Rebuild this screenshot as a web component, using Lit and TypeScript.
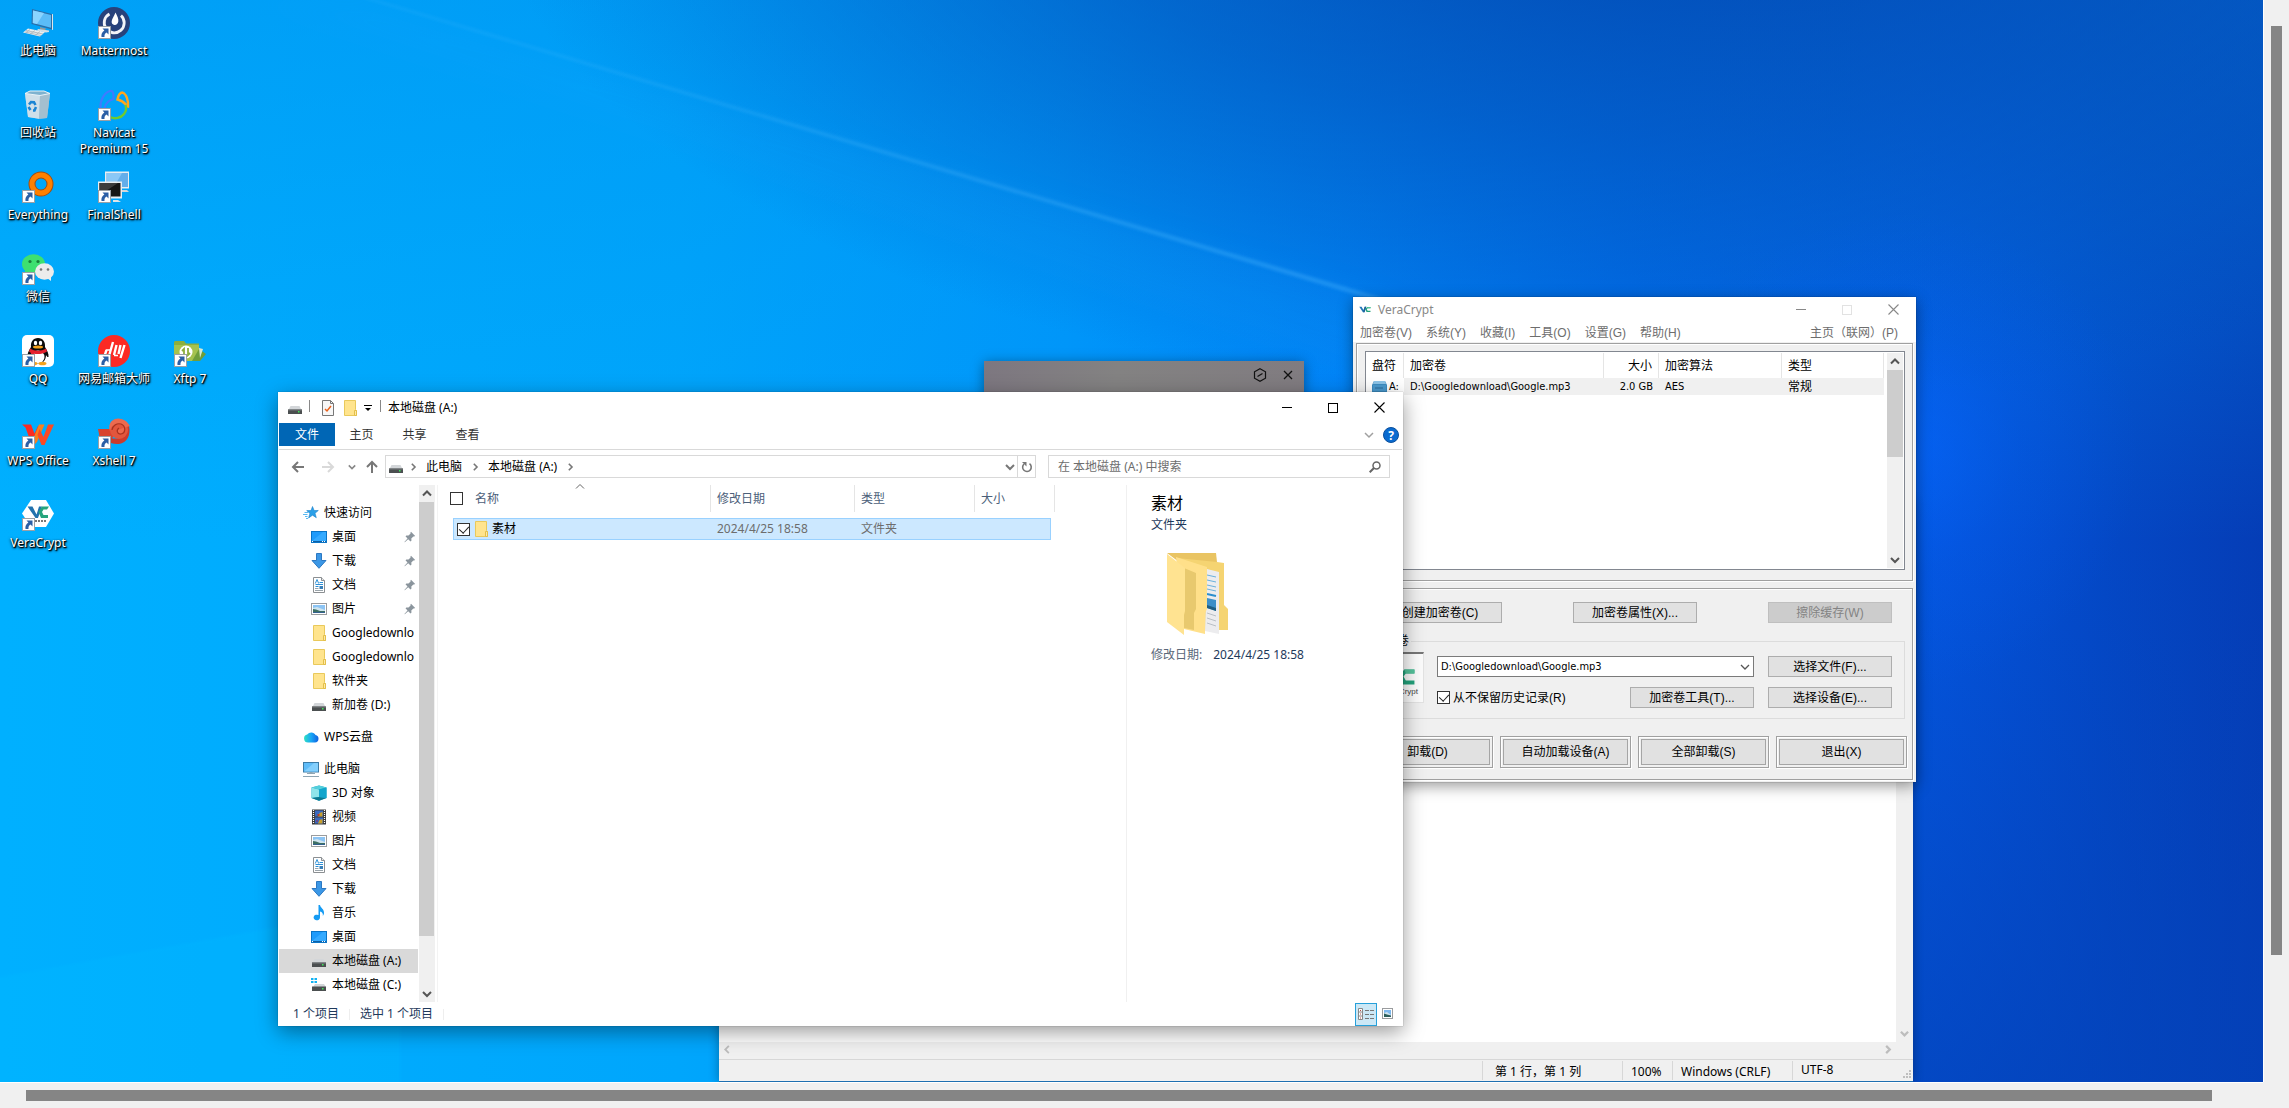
import { LitElement, html, css, svg, nothing, TemplateResult } from "lit";
import { customElement } from "lit/decorators.js";
import { classMap } from "lit/directives/class-map.js";

/* ---------- shared styles ---------- */

const base = css`
  * { box-sizing: border-box; }
  :host {
    display: block;
    font-family: "Noto Sans", "Noto Sans CJK SC", sans-serif;
    font-size: 12px;
    line-height: 16px;
    color: #000;
  }
  button, input, select { font: inherit; color: inherit; margin: 0; }
  button { padding: 0; border: 0; background: none; }
  svg { display: block; flex: none; }
  .check {
    appearance: none;
    display: block;
    flex: none;
    width: 13px;
    height: 13px;
    border: 1px solid #333;
    background: #fff;
    position: relative;
  }
  .check:checked::after {
    content: "";
    position: absolute;
    left: 3px;
    top: 0;
    width: 5px;
    height: 8px;
    border: solid #222;
    border-width: 0 1px 1px 0;
    transform: rotate(42deg);
  }
`;

/* ---------- small icons ---------- */

type Icon = () => TemplateResult;

const box = (w: number, h: number, body: unknown, vb = `0 0 ${w} ${h}`) =>
  html`<svg width=${w} height=${h} viewBox=${vb} aria-hidden="true">${body}</svg>`;

const chevron = (dir: "up" | "down" | "left" | "right", size = 9, color = "#555", weight = 2) => {
  const d = {
    up: "M1 6.5 5 2.5 9 6.5",
    down: "M1 3 5 7 9 3",
    left: "M6.5 1 2.5 5 6.5 9",
    right: "M3.5 1 7.5 5 3.5 9",
  }[dir];
  return box(size, size, svg`<path d=${d} fill="none" stroke=${color} stroke-width=${weight}/>`, "0 0 10 10");
};

const drive: Icon = () => box(16, 16, svg`
  <path d="M3.500 6h9l2 4h-13z" fill="#d3d6d9"/>
  <rect x="1" y="9.500" width="14" height="4.500" fill="#4b4f50"/>
  <rect x="1" y="9.500" width="14" height="1" fill="#74797b"/>
  <rect x="11" y="11" width="1.500" height="1.500" fill="#3fe85a"/>`);

const driveC: Icon = () => box(16, 16, svg`
  <path d="M0 1h2.500v2H0zM3.500 1H6v2H3.500zM0 4h2.500v2H0zM3.500 4H6v2H3.500z" fill="#12b3f3"/>
  <path d="M4 7h9l2 3H2z" fill="#d3d6d9"/>
  <rect x="1" y="9.500" width="14" height="4.500" fill="#4b4f50"/>
  <rect x="11" y="11" width="1.500" height="1.500" fill="#3fe85a"/>`);

const folder: Icon = () => box(16, 16, svg`
  <path d="M2.500 .5h11v9l1 1v5h-12z" fill="#ffe48d" stroke="#e9c95b"/>
  <path d="M12.500 15.500v-5h2v5z" fill="#ffe9a6" stroke="#e3bf4a"/>`);

const desktopIcon: Icon = () => box(16, 16, svg`
  <rect x=".5" y="2.500" width="15" height="11" fill="#1e9bfb" stroke="#0a74c6"/>
  <path d="M1 12 12 3h3v9z" fill="#35aaff"/>
  <rect x="1" y="12" width="14" height="1" fill="#0d5fa5"/>
  <path d="M1 12h1v1H1zM11 12h1v1h-1zM13 12h1v1h-1z" fill="#fff"/>`);

const download: Icon = () => box(16, 16, svg`
  <path d="M5.500 .5h5v7h4.500L8 15.300 1 7.500h4.500z" fill="#3b97e6" stroke="#2c78c2"/>`);

const documentIcon: Icon = () => box(16, 16, svg`
  <path d="M2.500 .5h8l3 3v12h-11z" fill="#fff" stroke="#8b8f92"/>
  <path d="M10.500 .5v3h3" fill="#e8e8e8" stroke="#8b8f92"/>
  <path d="M4.300 6.500l1.700-4 1.700 4M8.500 5.500h3.500M4.500 7.500h7.500M4.500 9.500h3" fill="none" stroke="#2c8fd6"/>
  <path d="M4 11.500h3.500M4 13.500h8" stroke="#9aa4aa"/>
  <rect x="8.500" y="9" width="3.500" height="3" fill="#3a7fb8"/>`);

const picture = (w = 16) => box(w, w, svg`
  <rect x=".5" y="2.500" width="15" height="11" fill="#fff" stroke="#9a9c9e"/>
  <rect x="2" y="4" width="12" height="8" fill="#8cc4f4"/>
  <path d="M2 7l4-1 8 3v3H2z" fill="#cfe4ee"/>
  <path d="M2 8l3 .5 4 1.500h5v2H2z" fill="#3d6f64"/>
  <path d="M2 11h12v1H2z" fill="#34618f"/>`, "0 0 16 16");

const thumbnails: Icon = () => box(14, 14, svg`
  <rect x="1.500" y="1.500" width="10" height="10" fill="#fff" stroke="#9a9c9e"/>
  <rect x="3" y="3" width="7" height="7" fill="#7db8ee"/>
  <path d="M3 6l3-1 4 3v2H3z" fill="#cfe4ee"/><path d="M3 6.500l3 1 4 1V10H3z" fill="#2e5f5c"/>`);

const star: Icon = () => box(16, 16, svg`
  <path d="M9.500 1.500l1.600 4h4.200l-3.300 2.800 1.300 4.400-3.800-2.500L5.600 13l1.300-4.600L3.700 5.600H8z" fill="#2ba0e8" stroke="#1c82c9" stroke-width=".6"/>
  <path d="M1.500 7.500H5M0 9.500h4.500M2 11.500h2.500M3 13.500h2" stroke="#58b9f2"/>`);

const cloud: Icon = () => box(16, 16, svg`
  <defs><linearGradient id="cg"><stop offset="0" stop-color="#2ee0c4"/><stop offset=".5" stop-color="#18a5f5"/><stop offset="1" stop-color="#1060e0"/></linearGradient></defs>
  <path d="M5 13.500a4 4 0 0 1-.8-7.900A4.800 4.800 0 0 1 12.500 6a3.800 3.800 0 0 1-.5 7.500z" fill="url(#cg)"/>`);

const computer: Icon = () => box(16, 16, svg`
  <rect x=".5" y="1.500" width="15" height="9.500" fill="#5fbcf8" stroke="#3c7ba6"/>
  <path d="M1 10.500 11 2h4v8.500z" fill="#83cffd"/>
  <path d="M4 12.500h8M0 15.500h16" stroke="#8fa5b2"/><path d="M8 11v2" stroke="#8fa5b2" stroke-width="3"/>`);

const cube: Icon = () => box(16, 16, svg`
  <path d="M8 .5 15.500 2.500v10.500L8 15.700.5 13V2.500z" fill="#1ba7c6"/>
  <path d="M.5 2.500 8 4.500v7.500L.5 13z" fill="#8fe4ea"/>
  <path d="M.5 2.500 8 .5l7.500 2L8 4.500z" fill="#54cfdc"/>
  <path d="M.5 13 8 12l7.500 1L8 15.700z" fill="#0c7890"/>
  <path d="M8 4.500v7.500l7.500 1V2.500z" fill="#12a5cc"/>`);

const video: Icon = () => box(16, 16, svg`
  <rect x="1" y=".5" width="14" height="15" fill="#3a3a3a"/>
  <path d="M2.500 1v14M13.500 1v14" stroke="#fff" stroke-width="1.200" stroke-dasharray="1 1"/>
  <rect x="4" y="1.500" width="8" height="6" fill="#3b6ac0"/><rect x="4" y="8.500" width="8" height="6" fill="#3b6ac0"/>
  <path d="M7 7.500l1.500-3.500 3-1v4.500z" fill="#c9a02c"/><path d="M6.500 5h2v2h-2z" fill="#b83a2a"/>
  <path d="M7 14.500l1.500-3.500 3-1v4.500z" fill="#c9a02c"/><path d="M5 11h2v2H5z" fill="#6b4a8a"/>`);

const music: Icon = () => box(16, 16, svg`
  <path d="M7.500 0h1.500c.4 3 4.500 4 4 8.500-.2 1-.6 1.800-1.200 2.500.5-2.500-.6-4.200-2.800-4.500V12.500a3.200 2.800 0 1 1-1.500-2.400z" fill="#159bf3"/>`);

const pin = () => box(12, 12, svg`
  <path d="M7 .8 11.200 5l-1.200.6-.6-.2L7.300 7.500l.2 2-1 .9L4.200 8.200.8 11.300l-.4-.4L3.500 7.500 1.500 5.300l.9-.9 2.100.1L6.600 2.500l-.2-.8z" fill="#8b959d"/>`);

const arrow = (color: string, turn = 0) => box(14, 14, svg`
  <path transform=${`rotate(${turn} 7 7)`} d="M13 7H2M7 2 2 7l5 5" fill="none" stroke=${color} stroke-width="2"/>`);

const closeX = (s = 11, color = "#000") => box(s, s, svg`
  <path d="M.5 .5 10.500 10.500M10.500 .5 .5 10.500" stroke=${color} stroke-width="1.100"/>`, "0 0 11 11");

const vcMark = (w: number, h: number) => box(w, h, svg`
  <path d="M1 2h9l7 12 2-4 3-8h6l-7 21h-6z" fill="#2277b8"/>
  <path d="M22 2h6l-7 21h-5z" fill="#1c5f93"/>
  <path d="M44 3H31l-7 9 5 10h15v-5H33l-3-5 3-4h11z" fill="#23a37c"/>
  <path d="M31 3h13v5H33z" fill="#54c39b"/>`, "0 0 46 25");

/* ---------- 32px desktop icons ---------- */

const shortcut = svg`
  <rect x=".5" y="19.500" width="12" height="12" fill="#fff" stroke="#9aa0a6"/>
  <path d="M4.500 21.500h6V27.500L8.600 25.600C6.900 26.700 6.300 28 6.500 30H3.500c-.5-3 .6-5.200 2.900-6.600z" fill="#2b5fa6"/>`;

const art: Record<string, unknown> = {
  pc: svg`
    <path d="M10 2 30 7v15.500L9.500 17z" fill="#2b6ea8"/><path d="M11 3.500 29 8v12.800L10.800 16z" fill="#5bbcf8"/>
    <path d="M11 3.500 22 6 15 17l-4.200-1z" fill="#8ad4ff"/><path d="M30 7l1 .3v15.400l-1 .3z" fill="#dfe6ea"/>
    <path d="M18 20l6 1.500-1 2-5-1z" fill="#8d999f"/><path d="M16 22l11 1.500v1.500l-3 .5-9-2z" fill="#d7dee2"/>
    <path d="M6 21.500l17 3.500-5 4.500-17-4z" fill="#e9edef"/><path d="M4 23.500l17 3.500M3 25l16 3.500M8 22.500l-4 3M13 23.500l-5 3.500M18 24.500l-5 4" stroke="#a9b2b8" stroke-width=".8"/>`,
  bin: svg`
    <path d="M3 4.500 8 2h14l6 2.500L25 29l-8 .8L6 28z" fill="#b5cfdf" opacity=".9"/>
    <path d="M3 4.500 18 6.500 17 29.800 6 28z" fill="#cfdfe9"/><path d="M18 6.500 28 4.500 25 29l-8 .8z" fill="#a4bfcf"/>
    <path d="M3 4.500 8 2h14l6 2.500-10 2z" fill="#7fb2cf" stroke="#e9f3f8"/>
    <path d="M7 15.500l2-2.500 3 .3 1.500 2.700M14 18l-1.500 3.500H11M8.500 21 6.500 18" fill="none" stroke="#1a84d4" stroke-width="2.500"/>`,
  mattermost: svg`
    <circle cx="16" cy="16" r="16" fill="#28427b"/>
    <path d="M11.500 7A10 10 0 1 0 23 8.500" fill="none" stroke="#f3f4f8" stroke-width="2.800"/>
    <path d="M17.500 5.500c2 4 3.200 6.500 2.800 9-.4 2.500-2 3.600-3.800 3.400-2-.3-3.200-2-2.800-4 .4-2.200 2.400-4.600 3.800-8.400z" fill="#fff"/>`,
  navicat: svg`
    <path d="M2.500 19C2 11 6 4 12 2c3-.5 4 2 3.500 8-4 1-8 4-9 9" fill="none" stroke="#3f7bff" stroke-width="2.200"/>
    <path d="M19.500 10.500c1-5 3-7 5-7 4 1.500 6 8 5.500 14-2-.5-3-5.500-10.500-7z" fill="none" stroke="#ffa61c" stroke-width="2.400"/>
    <path d="M12 28c5 2.500 11 1 14-3 2.500-3 2.500-6 1.500-9" fill="none" stroke="#6fcb2e" stroke-width="2.400"/>`,
  everything: svg`<circle cx="19" cy="13" r="9" fill="none" stroke="#a34d10" stroke-width="7"/><circle cx="19" cy="13" r="9" fill="none" stroke="#ff8000" stroke-width="5"/>`,
  finalshell: svg`
    <path d="M7 .5h24v17H7z" fill="#e9edf0"/><path d="M8.500 2h21.500v14H8.500z" fill="#63aeea"/><path d="M8.500 2H24l-8 14H8.500z" fill="#8ac8f6"/>
    <path d="M24 19h5l2 2h-7z" fill="#cfd6da"/>
    <path d="M0 10.500h24v17H0z" fill="#e9edf0"/><path d="M1.500 12h21v13.500h-21z" fill="#161616"/><path d="M1.500 12H20L8 20H1.500z" fill="#3c3c3c"/>
    <path d="M15 29h5l3 2h-8z" fill="#dfe4e7"/>`,
  wechat: svg`
    <ellipse cx="11.500" cy="11" rx="11.500" ry="9.800" fill="#3ee070"/><path d="M3 17v6l5-3z" fill="#3ee070"/>
    <circle cx="8" cy="8.500" r="1.600" fill="#1a7f3b"/><circle cx="16" cy="8.500" r="1.600" fill="#1a7f3b"/>
    <ellipse cx="22.500" cy="18.500" rx="9.500" ry="8.200" fill="#ececec"/><path d="M25 25l4 3v-5z" fill="#ececec"/>
    <circle cx="19" cy="16.500" r="1.300" fill="#777"/><circle cx="26" cy="16.500" r="1.300" fill="#777"/>`,
  qq: svg`
    <rect width="32" height="32" rx="5" fill="#fff"/>
    <path d="M16 3c-5 0-7.500 4-7 9-2 3-4 7-3.500 10 1 .5 2-1 2.500-2 0 5 3 8.500 8 8.500s8-3.500 8-8.500c.5 1 1.500 2.500 2.500 2 .5-3-1.500-7-3.500-10 .5-5-2-9-7-9z" fill="#0c0c0c"/>
    <ellipse cx="16" cy="22" rx="6.500" ry="6.500" fill="#fff"/>
    <ellipse cx="13.500" cy="8" rx="1.700" ry="2.300" fill="#fff"/><ellipse cx="18.500" cy="8" rx="1.700" ry="2.300" fill="#fff"/>
    <ellipse cx="16" cy="12" rx="5" ry="1.500" fill="#f5a21b"/>
    <path d="M8 13.500c5 3 11 3 16 0l1 3c-4 2.500-9 3-13 2.200V24H9v-6l-2-1.500z" fill="#e5202c"/>
    <ellipse cx="11.500" cy="28.500" rx="4" ry="1.800" fill="#f5a21b"/><ellipse cx="20.500" cy="28.500" rx="4" ry="1.800" fill="#f5a21b"/>`,
  netease: svg`
    <circle cx="16" cy="16" r="16" fill="#fb2a24"/>
    <path d="M6.500 21l2-6M11 21l4-14M16 20l2.500-10M20.500 19l2-9M22.500 23l4-13" stroke="#fff" stroke-width="2.400" fill="none"/>
    <path d="M8 15h4M8 20.500h3.500M16 20.500h4" stroke="#fff" stroke-width="1.300"/>`,
  xftp: svg`
    <path d="M0 7l1-1h9l2 2.500h13V26H0z" fill="#8cae3e"/><path d="M0 10h25v16H0z" fill="#a5c24e"/>
    <path d="M25 14l7 5-6 7h-8z" fill="#6f9d3a"/><path d="M25 13l4 1-3 9z" fill="#d9ead0"/>
    <circle cx="12" cy="17" r="6.500" fill="#fff"/><path d="M10 21v-7l-2 2M14 13v7l2-2" stroke="#8cae3e" stroke-width="1.800" fill="none"/>`,
  wps: svg`
    <path d="M0 7.500h9l3.500 9L16 9l3.500-1.500L13 27H9.500L3.500 10.500z" fill="#fb2b22"/>
    <path d="M17 7.500h5.500L15 25l-2 2-1.500-6z" fill="#f7801f"/>
    <path d="M17.500 12l4 8L26 7.500h6L22.500 28h-3L15.500 18z" fill="#fb4a24"/>`,
  xshell: svg`
    <path d="M0 12h13l4 3-3 7H2z" fill="#d8442f"/>
    <path d="M31 9c2 9-2 17-10 18-5 .5-9-1-11-3l3-3c7 2 15-1 15-12z" fill="#cc3a2c"/>
    <circle cx="21" cy="13" r="9" fill="#e2563d"/>
    <path d="M32 9C29 3 22 0 17 2c-5 2-7 7-5 12 1-5 5-8 9-7 5 0 7 6 3 9-2 1-5 0-5-3" fill="#ec6a4f"/>
    <path d="M14 13c1-5 5-7 9-6 5 2 5 9 0 10-4 .5-5-4-2-6" fill="none" stroke="#a8321f" stroke-width="1.200"/>`,
  veracrypt: svg`
    <path d="M9 1h15l8 13.500L24 28H9L0 14.500z" fill="#fff"/>
    <path d="M5.500 7.500h5l4 8 1-3 1.500-5h3L16 19h-2.500z" fill="#2272ad"/>
    <path d="M27 7.500h-7l-3.500 5.500 2.500 6h7v-3h-4.500l-1.500-3 1.500-2.500h3.500z" fill="#27a57d"/>
    <path d="M13 22h11" stroke="#777" stroke-width="2" stroke-dasharray="2 1"/>`,
};

const shortcuts: { id: string; label: string; col: number; row: number; link?: boolean }[] = [
  { id: "pc", label: "此电脑", col: 1, row: 1, link: false },
  { id: "mattermost", label: "Mattermost", col: 2, row: 1 },
  { id: "bin", label: "回收站", col: 1, row: 2, link: false },
  { id: "navicat", label: "Navicat Premium 15", col: 2, row: 2 },
  { id: "everything", label: "Everything", col: 1, row: 3 },
  { id: "finalshell", label: "FinalShell", col: 2, row: 3 },
  { id: "wechat", label: "微信", col: 1, row: 4 },
  { id: "qq", label: "QQ", col: 1, row: 5 },
  { id: "netease", label: "网易邮箱大师", col: 2, row: 5 },
  { id: "xftp", label: "Xftp 7", col: 3, row: 5 },
  { id: "wps", label: "WPS Office", col: 1, row: 6 },
  { id: "xshell", label: "Xshell 7", col: 2, row: 6 },
  { id: "veracrypt", label: "VeraCrypt", col: 1, row: 7 },
];

/* ---------- file explorer ---------- */

interface NavItem { label: string; icon: Icon; root?: boolean; pinned?: boolean; active?: boolean; gap?: boolean }

const navItems: NavItem[] = [
  { label: "快速访问", icon: star, root: true },
  { label: "桌面", icon: desktopIcon, pinned: true },
  { label: "下载", icon: download, pinned: true },
  { label: "文档", icon: documentIcon, pinned: true },
  { label: "图片", icon: picture, pinned: true },
  { label: "Googledownlo", icon: folder },
  { label: "Googledownlo", icon: folder },
  { label: "软件夹", icon: folder },
  { label: "新加卷 (D:)", icon: drive },
  { label: "WPS云盘", icon: cloud, root: true, gap: true },
  { label: "此电脑", icon: computer, root: true, gap: true },
  { label: "3D 对象", icon: cube },
  { label: "视频", icon: video },
  { label: "图片", icon: picture },
  { label: "文档", icon: documentIcon },
  { label: "下载", icon: download },
  { label: "音乐", icon: music },
  { label: "桌面", icon: desktopIcon },
  { label: "本地磁盘 (A:)", icon: drive, active: true },
  { label: "本地磁盘 (C:)", icon: driveC },
];

@customElement("file-explorer")
export class FileExplorer extends LitElement {
  static styles = [base, css`
    :host {
      display: flex;
      flex-direction: column;
      padding: 0 1px;
      background: #fff;
      box-shadow: 0 0 1px #0006, 0 6px 20px #0006;
    }
    .titlebar { display: flex; align-items: center; height: 31px; padding-left: 8px; }
    .quick { display: flex; align-items: center; gap: 6px; }
    .rule { width: 1px; height: 12px; background: #888; margin: 0 4px 3px 0; }
    .rule.last { margin: 0 7px 3px 2px; }
    .title { flex: 1; font-weight: 400; font-size: 12px; margin: 0; }
    .caption { display: flex; height: 31px; }
    .caption button { width: 46px; display: grid; place-items: center; }
    .square { width: 10px; height: 10px; border: 1px solid #000; }
    .dash { width: 10px; height: 1px; background: #000; }
    .ribbon { display: flex; height: 27px; padding-bottom: 3px; border-bottom: 1px solid #d9d9d9; color: #333; }
    .ribbon button { width: 53px; height: 24px; }
    .ribbon .file { width: 56px; height: 23px; background: #0066b5; color: #fff; }
    .ribbon .spacer { flex: 1; }
    .ribbon .tool { width: 22px; display: grid; place-items: center; }
    .address { display: flex; align-items: center; height: 35px; padding: 5px 12px 7px 11px; }
    .address .nav { width: 16px; height: 23px; display: grid; place-items: center; }
    .address .fwd { margin-left: 14px; }
    .address .recent { margin-left: 8px; }
    .address .parent { margin: 0 5px 0 4px; }
    .crumbs { display: flex; align-items: center; flex: 1; height: 23px; border: 1px solid #d9d9d9; padding-left: 2px; }
    .crumbs .sep { margin: 0 9px; }
    .crumbs .sep.first { margin-left: 5px; }
    .crumbs .end { flex: 1; }
    .crumbs .drop { width: 14px; display: grid; place-items: center; }
    .crumbs .reload { width: 18px; height: 21px; border-left: 1px solid #d9d9d9; display: grid; place-items: center; }
    .search { display: flex; align-items: center; width: 342px; height: 23px; margin-left: 12px; padding: 0 8px 0 9px; border: 1px solid #d9d9d9; }
    .search input { flex: 1; min-width: 0; border: 0; padding: 0; outline: 0; background: none; }
    .search input::placeholder { color: #6d6d6d; opacity: 1; }
    .main { flex: 1; display: flex; min-height: 0; }
    .tree { width: 139px; margin: 0 1px 0 0; padding: 16px 0 0; list-style: none; overflow: hidden; }
    .tree li.gap { margin-top: 8px; }
    .tree a { display: flex; align-items: center; gap: 5px; height: 24px; padding: 0 0 0 32px; color: inherit; text-decoration: none; white-space: nowrap; }
    .tree a.root { padding-left: 24px; }
    .tree a.active { background: #d9d9d9; }
    .tree .name { flex: 1; }
    .tree .pin { margin-right: 2px; }
    .scroll { width: 16px; display: flex; flex-direction: column; align-items: center; background: #f0f0f0; }
    .scroll .cap { height: 17px; display: grid; place-items: center; }
    .scroll .thumb { width: 15px; height: 84%; margin-right: 1px; background: #cdcdcd; }
    .scroll .room { flex: 1; }
    .files { flex: 1; min-width: 0; margin-left: 2px; padding-left: 15px; border-left: 1px solid #f3f3f3; position: relative; }
    .sort { position: absolute; left: 137px; top: -3px; }
    table { border-collapse: separate; border-spacing: 0; table-layout: fixed; width: 602px; }
    th { height: 33px; padding: 0 0 6px 6px; text-align: left; font-weight: 400; color: #4c607a;
      background: linear-gradient(#e5e5e5, #e5e5e5) right top / 1px 27px no-repeat; }
    td { height: 22px; padding: 0 0 0 6px; color: #6d6d6d; }
    tbody td { background: #cce8ff; border: solid #99d1ff; border-width: 1px 0; }
    tbody td:first-child { border-left-width: 1px; }
    tbody td.last { border-right-width: 1px; }
    tbody td.outside { background: none; border: 0; }
    th:first-child { padding-left: 0; }
    tbody td:first-child { padding-left: 3px; color: #000; }
    .cell { display: flex; align-items: center; gap: 3px; }
    .cell.head { gap: 12px; margin-left: -3px; }
    .preview { width: 276px; padding: 8px 0 0 24px; border-left: 1px solid #f0f0f0; color: #1e395b; }
    .preview h2 { margin: 0; font-size: 16px; line-height: 20px; font-weight: 400; color: #000; }
    .preview p { margin: 4px 0 0; }
    .preview svg { margin: 20px 0 12px 16px; }
    .preview dl { display: flex; gap: 11px; margin: 0; }
    .preview dt { color: #5a6779; }
    .preview dd { margin: 0; }
    .status { display: flex; align-items: center; height: 24px; padding: 0 3px 0 14px; color: #1e395b; }
    .status .mark { width: 1px; height: 11px; background: #eee; margin: 0 10px; }
    .status .spacer { flex: 1; }
    .status .view { width: 22px; height: 23px; display: grid; place-items: center; }
    .status .on { background: #cce8f6; border: 1px solid #26a0da; }
  `];

  render() {
    return html`
      <header class="titlebar">
        <div class="quick">
          ${drive()}<span class="rule"></span>
          ${box(16, 16, svg`<path d="M2.500 .5h8l3 3v12h-11z" fill="#f7f7f7" stroke="#777"/><path d="M10.500 .5v3h3" fill="none" stroke="#777"/><path d="M5 9l2 2 4-5" fill="none" stroke="#e8611c" stroke-width="1.500"/>`)}
          ${folder()}
          ${box(8, 8, svg`<path d="M0 1.500h8" stroke="#000"/><path d="M1 4h6L4 7z"/>`)}
          <span class="rule last"></span>
        </div>
        <h1 class="title">本地磁盘 (A:)</h1>
        <div class="caption">
          <button aria-label="最小化"><span class="dash"></span></button>
          <button aria-label="最大化"><span class="square"></span></button>
          <button aria-label="关闭">${closeX()}</button>
        </div>
      </header>
      <nav class="ribbon">
        <button class="file">文件</button><button>主页</button><button>共享</button><button>查看</button>
        <span class="spacer"></span>
        <button class="tool" aria-label="展开功能区">${chevron("down", 10, "#a0a0a0", 1.5)}</button>
        <button class="tool" aria-label="帮助">
          ${box(16, 16, svg`<circle cx="8" cy="8" r="7.500" fill="#0a6bd0" stroke="#0a4f9c"/><text x="8" y="12.500" text-anchor="middle" font-size="12" font-weight="700" fill="#fff">?</text>`)}
        </button>
      </nav>
      <div class="address">
        <button class="nav" aria-label="后退">${arrow("#777")}</button>
        <button class="nav fwd" aria-label="前进">${arrow("#d9d9d9", 180)}</button>
        <button class="nav recent" aria-label="最近的位置">${chevron("down", 8, "#888", 2)}</button>
        <button class="nav parent" aria-label="向上">${arrow("#777", 90)}</button>
        <div class="crumbs">
          ${drive()}<span class="sep first">${chevron("right", 8, "#777")}</span>
          <button>此电脑</button><span class="sep">${chevron("right", 8, "#777")}</span>
          <button>本地磁盘 (A:)</button><span class="sep">${chevron("right", 8, "#777")}</span>
          <span class="end"></span>
          <button class="drop" aria-label="上一个位置">${chevron("down", 10, "#777", 2)}</button>
          <button class="reload" aria-label="刷新">
            ${box(12, 12, svg`<path d="M8.500 2.700A4.300 4.300 0 1 1 3 3" fill="none" stroke="#777" stroke-width="1.600"/><path d="M1 1h4.500v4.500z" fill="#777"/>`)}
          </button>
        </div>
        <label class="search">
          <input type="search" aria-label="搜索" placeholder="在 本地磁盘 (A:) 中搜索">
          ${box(12, 12, svg`<circle cx="7.500" cy="4.500" r="3.500" fill="none" stroke="#666" stroke-width="1.500"/><path d="M5 7 .7 11.300" stroke="#666" stroke-width="2"/>`)}
        </label>
      </div>
      <div class="main">
        <ul class="tree">
          ${navItems.map((n) => html`
            <li class=${classMap({ gap: !!n.gap })}>
              <a href="#" class=${classMap({ root: !!n.root, active: !!n.active })}>
                ${n.icon === picture ? picture() : n.icon()}<span class="name">${n.label}</span>${n.pinned ? html`<span class="pin">${pin()}</span>` : nothing}
              </a>
            </li>`)}
        </ul>
        <div class="scroll">
          <span class="cap">${chevron("up", 10)}</span>
          <span class="thumb"></span><span class="room"></span>
          <span class="cap">${chevron("down", 10)}</span>
        </div>
        <section class="files">
          <span class="sort">${chevron("up", 10, "#666", 1)}</span>
          <table>
            <colgroup><col width="258"><col width="144"><col width="120"><col width="76"><col width="4"></colgroup>
            <thead><tr>
              <th><label class="cell head"><input class="check" type="checkbox" aria-label="全选">名称</label></th>
              <th>修改日期</th><th>类型</th><th colspan="2">大小</th>
            </tr></thead>
            <tbody><tr>
              <td><label class="cell"><input class="check" type="checkbox" checked>${folder()}<span>素材</span></label></td>
              <td>2024/4/25 18:58</td><td>文件夹</td><td class="last"></td><td class="outside"></td>
            </tr></tbody>
          </table>
        </section>
        <aside class="preview">
          <h2>素材</h2>
          <p>文件夹</p>
          ${box(62, 82, svg`
            <path d="M0 0h49l1 9H12z" fill="#e9c463"/>
            <path d="M10 5 50 9l7 1v42l4 4v21H34z" fill="#f5d472"/>
            <path d="M40 16l12 3v62l-14-3z" fill="#ececee"/>
            <path d="M40 22l9 2M40 27l9 2M40 32l9 2M40 36l9 2" stroke="#6ab0dc"/><path d="M40 41l9 2" stroke="#2b8fce" stroke-width="2"/>
            <path d="M40 45l9 2v11l-9-3z" fill="#3d8fc8"/><path d="M40 52l9 3v3l-9-3z" fill="#1f5e82"/>
            <path d="M40 60l9 3M40 65l9 3M40 70l9 3" stroke="#b8bec4"/>
            <path d="M9 4 40 14v42l-2 4v21L17 76z" fill="#ffe08a"/>
            <path d="M17 15 29 20v36l-2 4v17l-10-2z" fill="#e8c96e"/>
            <path d="M0 1 18 15v43l-1 4v20L0 69z" fill="#ffe391"/>`)}
          <dl><dt>修改日期:</dt><dd>2024/4/25 18:58</dd></dl>
        </aside>
      </div>
      <footer class="status">
        <span>1 个项目</span><span class="mark"></span><span>选中 1 个项目</span><span class="mark"></span>
        <span class="spacer"></span>
        <button class="view on" aria-label="详细信息">
          ${box(16, 16, svg`<path d="M.5 2.500h4v11h-4zM.5 6h4M.5 10h4" fill="#fff" stroke="#888"/><path d="M2 4h1v1H2zM2 7.500h1v1H2zM2 11.500h1v1H2z" fill="#b05050"/><path d="M7 4.500h4M12 4.500h4M7 8.500h4M12 8.500h4M7 12.500h4M12 12.500h4" stroke="#777"/>`)}
        </button>
        <button class="view" aria-label="大缩略图">${thumbnails()}</button>
      </footer>`;
  }
}

/* ---------- VeraCrypt ---------- */

@customElement("vera-crypt")
export class VeraCrypt extends LitElement {
  static styles = [base, css`
    :host {
      display: flex;
      flex-direction: column;
      background: #f0f0f0;
      font-family: "Liberation Sans", "Noto Sans CJK SC", sans-serif;
      box-shadow: 0 0 1px #0008, 0 4px 14px #0006;
    }
    .titlebar { display: flex; align-items: center; gap: 7px; height: 25px; padding-left: 6px; background: #fff; color: #888; font-family: "Noto Sans", sans-serif; }
    .title { flex: 1; margin: 0; font-size: 12px; font-weight: 400; }
    .caption { display: flex; height: 25px; }
    .caption button { width: 46px; display: grid; place-items: center; }
    .dash { width: 10px; height: 1px; background: #888; }
    .square { width: 10px; height: 10px; border: 1px solid #e2e2e2; }
    .menu { display: flex; gap: 14px; height: 20px; padding: 1px 18px 0 7px; background: #fff; color: #6d6d6d; }
    .menu .home { margin-left: auto; }
    .panel { margin: 1px 3px 0; border: 1px solid #a0a0a0; box-shadow: inset 1px 1px #fff, 1px 1px #fff; }
    .volumes { padding: 7px 7px 10px 8px; }
    .list { display: flex; justify-content: space-between; height: 219px; padding: 1px 1px 1px 0; border: 1px solid #828790; background: #fff; }
    table { border-collapse: separate; border-spacing: 0; table-layout: fixed; width: 518px; height: 42px; }
    th { height: 25px; padding: 0 6px; border-right: 1px solid #e5e5e5; text-align: left; font-weight: 400; }
    td { height: 17px; padding: 0 6px; background: #f0f0f0; line-height: 16px; white-space: nowrap; }
    .right { text-align: right; }
    .path { font-family: "DejaVu Sans Condensed", "Noto Sans CJK SC", sans-serif; font-size: 11px; }
    .letter { display: flex; align-items: center; gap: 2px; }
    td:first-child { padding-right: 0; background: #fff; }
    .scroll { width: 16px; display: flex; flex-direction: column; align-items: center; background: #f0f0f0; }
    .scroll .cap { height: 17px; display: grid; place-items: center; }
    .scroll .thumb { width: 100%; height: 87px; background: #cdcdcd; }
    .scroll .room { flex: 1; }
    .actions { margin-top: 7px; padding: 13px 5px 11px; }
    .push { width: 124px; height: 21px; border: 1px solid #adadad; background: #e1e1e1; }
    .push:disabled { background: #ccc; border-color: #bfbfbf; color: #838383; }
    .row { display: flex; justify-content: space-between; padding: 0 15px 0 16px; }
    fieldset { display: flex; gap: 13px; margin: 10px 2px 0 3px; padding: 3px 12px 10px 7px; border: 1px solid #dcdcdc; min-width: 0; }
    legend { padding: 0 2px 0 0; height: 16px; }
    .logo { width: 51px; height: 51px; padding: 13px 5px 0; background: #fcfcfc; border: solid; border-width: 2px 1px 1px 2px; border-color: #777 #e3e3e3 #e3e3e3 #777; font-size: 8px; line-height: 10px; color: #444; text-align: right; }
    .form { flex: 1; display: grid; grid-template-columns: 1fr 124px; gap: 10px 14px; padding-top: 4px; align-content: start; }
    .combo { position: relative; height: 21px; }
    select { appearance: none; display: block; width: 100%; height: 21px; padding: 0 3px; border: 1px solid #7a7a7a; border-radius: 0; background: #fff; color: #000; }
    .combo svg { position: absolute; right: 4px; top: 6px; pointer-events: none; }
    .keep { display: flex; align-items: center; justify-content: space-between; }
    .keep label { display: flex; align-items: center; gap: 3px; }
    .bottom { display: flex; justify-content: space-between; margin-top: 17px; }
    .frame { width: 131px; height: 32px; padding: 2px; border: 1px solid #a0a0a0; box-shadow: inset 1px 1px #fff, 1px 1px #fff; }
    .frame .push { display: block; width: 100%; height: 26px; border: 1px solid #a5a5a5; }
  `];

  render() {
    const path = "D:\\Googledownload\\Google.mp3";
    return html`
      <header class="titlebar">
        ${vcMark(12, 9)}
        <h1 class="title">VeraCrypt</h1>
        <div class="caption">
          <button aria-label="最小化"><span class="dash"></span></button>
          <button aria-label="最大化" disabled><span class="square"></span></button>
          <button aria-label="关闭">${closeX(11, "#888")}</button>
        </div>
      </header>
      <nav class="menu">
        ${["加密卷(V)", "系统(Y)", "收藏(I)", "工具(O)", "设置(G)", "帮助(H)"].map((m) => html`<button>${m}</button>`)}
        <button class="home">主页（联网）(P)</button>
      </nav>
      <section class="panel volumes">
        <div class="list">
          <table>
            <colgroup><col width="38"><col width="200"><col width="55"><col width="123"><col width="102"></colgroup>
            <thead><tr><th>盘符</th><th>加密卷</th><th class="right">大小</th><th>加密算法</th><th>类型</th></tr></thead>
            <tbody><tr>
              <td class="path"><span class="letter">${box(15, 13, svg`<path d="M2 1h11l2 4v7H0V5z" fill="#3d8cc0"/><path d="M2 1h11l1 3H1z" fill="#8cc4e8"/><path d="M1 5h13v6H1z" fill="#4b9ace"/><path d="M3 8h8" stroke="#2b6d9c"/>`)}A:</span></td>
              <td class="path">${path}</td><td class="path right">2.0 GB</td><td class="path">AES</td><td>常规</td>
            </tr></tbody>
          </table>
          <div class="scroll">
            <span class="cap">${chevron("up", 10)}</span><span class="thumb"></span><span class="room"></span>
            <span class="cap">${chevron("down", 10)}</span>
          </div>
        </div>
      </section>
      <section class="panel actions">
        <div class="row">
          <button class="push">创建加密卷(C)</button>
          <button class="push">加密卷属性(X)...</button>
          <button class="push" disabled>擦除缓存(W)</button>
        </div>
        <fieldset>
          <legend>加密卷</legend>
          <div class="logo">${vcMark(36, 20)}VeraCrypt</div>
          <div class="form">
            <div class="combo">
              <select class="path" aria-label="加密卷"><option>${path}</option></select>
              ${chevron("down", 10, "#555", 1.3)}
            </div>
            <button class="push">选择文件(F)...</button>
            <div class="keep">
              <label><input class="check" type="checkbox" checked>从不保留历史记录(R)</label>
              <button class="push">加密卷工具(T)...</button>
            </div>
            <button class="push">选择设备(E)...</button>
          </div>
        </fieldset>
        <div class="bottom">
          ${["卸载(D)", "自动加载设备(A)", "全部卸载(S)", "退出(X)"].map((b) => html`<div class="frame"><button class="push">${b}</button></div>`)}
        </div>
      </section>`;
  }
}

/* ---------- text editor behind the other windows ---------- */

@customElement("note-pad")
export class NotePad extends LitElement {
  static styles = [base, css`
    :host { display: flex; flex-direction: column; background: #f0f0f0; border-bottom: 1px solid #1d6fb0; box-shadow: 0 0 10px #0005; }
    .area { flex: 1; display: flex; min-height: 0; }
    textarea { flex: 1; border: 0; padding: 4px; resize: none; outline: 0; background: #fff; }
    .vertical { width: 17px; display: flex; align-items: flex-end; justify-content: center; padding-bottom: 4px; }
    .horizontal { display: flex; justify-content: space-between; align-items: center; height: 17px; padding: 0 21px 2px 4px; }
    .status { display: flex; height: 22px; border-top: 1px solid #d7d7d7; line-height: 21px; }
    .status span { margin-top: 1px; height: 19px; border-left: 1px solid #d7d7d7; padding-left: 8px; }
    .status .line { margin-left: auto; width: 140px; padding-left: 12px; }
    .status .zoom { width: 50px; }
    .status .eol { width: 120px; }
    .status .code { width: 121px; display: flex; justify-content: space-between; align-items: flex-end; }
  `];

  render() {
    return html`
      <div class="area">
        <textarea aria-label="文本"></textarea>
        <div class="vertical">${chevron("down", 9, "#bdbdbd", 2.5)}</div>
      </div>
      <div class="horizontal">${chevron("left", 9, "#bdbdbd", 2)}${chevron("right", 9, "#bdbdbd", 2.5)}</div>
      <footer class="status">
        <span class="line">第 1 行，第 1 列</span>
        <span class="zoom">100%</span>
        <span class="eol">Windows (CRLF)</span>
        <span class="code">UTF-8 ${box(10, 10, svg`<path d="M6 0h2v2H6zM3 3h2v2H3zM6 3h2v2H6zM0 6h2v2H0zM3 6h2v2H3zM6 6h2v2H6z" fill="#bfbfbf"/>`)}</span>
      </footer>`;
  }
}

/* ---------- desktop ---------- */

@customElement("app-root")
export class AppRoot extends LitElement {
  static styles = [base, css`
    :host { display: grid; grid-template: minmax(0, 1fr) 26px / minmax(0, 1fr) 26px; height: 100vh; background: #f0f0f0; }
    .desktop { position: relative; overflow: hidden; }
    .wallpaper { position: absolute; inset: 0; width: 100%; height: 100%; }
    .icons { position: relative; display: grid; grid-template-columns: repeat(3, 76px); grid-auto-rows: 82px; padding-top: 7px; }
    .icon { display: flex; flex-direction: column; align-items: center; gap: 4px; height: 82px; color: #fff; text-align: center; text-decoration: none; line-height: 16px;
      text-shadow: 1px 1px 1px #000, 1px 1px 2px #000, 0 1px 3px #000c; }
    .icon svg { overflow: visible; }
    .window { position: absolute; }
    .notepad { left: 719px; top: 500px; width: 1194px; bottom: 0; }
    .panel { left: 984px; top: 361px; width: 320px; height: 100px; display: flex; justify-content: flex-end; gap: 15px; padding: 7px 10px; background: linear-gradient(100deg, #7d7780, #838282 40%, #807b80); box-shadow: 0 2px 12px #0006; }
    .panel button { height: 14px; }
    .veracrypt { left: 1353px; top: 297px; width: 563px; height: 485px; }
    .explorer { left: 278px; top: 392px; width: 1125px; height: 634px; }
    .bar-v { border-left: 1px solid #fff; padding: 26px 7px 0; }
    .bar-h { border-top: 1px solid #fff; padding: 7px 0 0 26px; grid-column: 1; }
    .thumb { background: #858585; }
    .bar-v .thumb { height: 88%; }
    .bar-h .thumb { width: 97.7%; height: 11px; }
  `];

  render() {
    return html`
      <main class="desktop">
        <svg class="wallpaper" viewBox="0 0 2263 1082" preserveAspectRatio="none" aria-hidden="true">
          <defs>
            <linearGradient id="base">
              <stop offset="0" stop-color="#00b0ff"/><stop offset=".3" stop-color="#00a6fc"/>
              <stop offset=".47" stop-color="#0096fb"/><stop offset=".6" stop-color="#0080f8"/>
              <stop offset=".72" stop-color="#0066ea"/><stop offset=".86" stop-color="#0454dc"/>
              <stop offset=".93" stop-color="#0448c6"/><stop offset="1" stop-color="#053db6"/>
            </linearGradient>
            <radialGradient id="dusk" cx="1650" cy="-150" r="900" gradientUnits="userSpaceOnUse" gradientTransform="translate(1650 -150) scale(1.3 .62) translate(-1650 150)">
              <stop offset="0" stop-color="#0340a8" stop-opacity=".9"/><stop offset=".5" stop-color="#0448b0" stop-opacity=".55"/><stop offset="1" stop-color="#0448b0" stop-opacity="0"/>
            </radialGradient>
            <radialGradient id="glow" cx="1900" cy="450" r="240" gradientUnits="userSpaceOnUse">
              <stop offset="0" stop-color="#0566ff" stop-opacity=".6"/><stop offset=".5" stop-color="#0560f5" stop-opacity=".2"/><stop offset="1" stop-color="#0560f5" stop-opacity="0"/>
            </radialGradient>
            <linearGradient id="floor" x1="0" y1="0" x2="0" y2="1">
              <stop offset=".5" stop-color="#0342b8" stop-opacity="0"/><stop offset="1" stop-color="#0342b8" stop-opacity=".7"/>
            </linearGradient>
            <linearGradient id="sky" x1="0" y1="0" x2="0" y2="1">
              <stop offset="0" stop-color="#0090ee" stop-opacity=".45"/><stop offset=".5" stop-color="#0098f0" stop-opacity="0"/>
            </linearGradient>
            <linearGradient id="beam"><stop offset="0" stop-color="#5cc8ff" stop-opacity=".12"/><stop offset="1" stop-color="#49b4ff" stop-opacity=".38"/></linearGradient>
            <filter id="soft"><feGaussianBlur stdDeviation="1.500"/></filter>
            <filter id="softer"><feGaussianBlur stdDeviation="14"/></filter>
          </defs>
          <rect width="2263" height="1082" fill="url(#base)"/>
          <rect width="2263" height="1082" fill="url(#sky)"/>
          <rect width="2263" height="1082" fill="url(#dusk)"/>
          <rect x="1850" width="413" height="1082" fill="url(#floor)"/>
          <rect x="1600" y="150" width="663" height="600" fill="url(#glow)"/>
          <path d="M365 0 1400 304v80L240 0z" fill="#19a4ff" opacity=".1" filter="url(#softer)"/>
          <path d="M370 -2 1400 303v5L362 -2z" fill="url(#beam)" filter="url(#soft)"/>
          <path d="M-40 984 400 905v227H-40z" fill="#00bcff" opacity=".25" filter="url(#soft)"/>
        </svg>
        <nav class="icons">
          ${shortcuts.map((s) => html`
            <a class="icon" href="#" style=${`grid-area:${s.row}/${s.col}`}>
              <svg width="32" height="32" viewBox="0 0 32 32" aria-hidden="true">${art[s.id]}${s.link === false ? nothing : shortcut}</svg>
              <span>${s.label}</span>
            </a>`)}
        </nav>
        <note-pad class="window notepad"></note-pad>
        <div class="window panel">
          <button aria-label="安全">${box(14, 14, svg`<path d="M7 .7 12.500 3.800v6.400L7 13.300 1.500 10.200V3.800z" fill="none" stroke="#111" stroke-width="1.200"/><path d="M4.500 8.500 9.500 5.500" stroke="#111" stroke-width="1.300"/>`)}</button>
          <button aria-label="关闭">${box(12, 14, svg`<path d="M2 3l8 8M10 3l-8 8" stroke="#111" stroke-width="1.300"/>`)}</button>
        </div>
        <vera-crypt class="window veracrypt"></vera-crypt>
        <file-explorer class="window explorer"></file-explorer>
      </main>
      <div class="bar-v"><div class="thumb"></div></div>
      <div class="bar-h"><div class="thumb"></div></div>`;
  }
}
